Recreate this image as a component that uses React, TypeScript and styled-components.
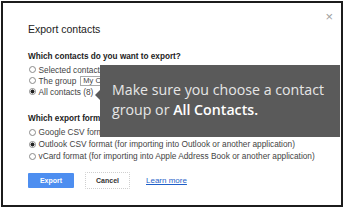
import styled, { createGlobalStyle } from "styled-components";

const GlobalStyle = createGlobalStyle`
  html, body {
    margin: 0;
    padding: 0;
    background: #ffffff;
  }
  body {
    font-family: "Liberation Sans", Arial, sans-serif;
  }
`;

interface Option {
  label: string;
  checked?: boolean;
  withSelect?: boolean;
}

const contactOptions: Option[] = [
  { label: "Selected contacts (0)" },
  { label: "The group", withSelect: true },
  { label: "All contacts (8)", checked: true },
];

const formatOptions: Option[] = [
  { label: "Google CSV format (for importing into a Google account)" },
  {
    label: "Outlook CSV format (for importing into Outlook or another application)",
    checked: true,
  },
  {
    label:
      "vCard format (for importing into Apple Address Book or another application)",
  },
];

function RadioList({ options, pitch }: { options: Option[]; pitch: number }) {
  return (
    <List>
      {options.map((o) => (
        <RadioRow key={o.label} height={pitch}>
          <Radio checked={!!o.checked} />
          <span>{o.label}</span>
          {o.withSelect && <GroupSelect>My Contacts</GroupSelect>}
        </RadioRow>
      ))}
    </List>
  );
}

export default function App() {
  return (
    <>
      <GlobalStyle />
      <Frame>
        <Dialog>
          <Close>×</Close>
          <Title>Export contacts</Title>
          <Heading top={17}>Which contacts do you want to export?</Heading>
          <RadioList options={contactOptions} pitch={11} />
          <Heading top={17}>Which export format?</Heading>
          <RadioList options={formatOptions} pitch={12} />
          <Actions>
            <Button primary>Export</Button>
            <Button>Cancel</Button>
            <LearnMore href="#">Learn more</LearnMore>
          </Actions>
        </Dialog>
        {/* tooltip sits over the form, as in the screenshot */}
        <Tooltip>
          Make sure you choose a contact
          <br />
          group or <strong>All Contacts.</strong>
        </Tooltip>
      </Frame>
    </>
  );
}

const Frame = styled.div`
  position: relative;
  box-sizing: border-box;
  margin: 1px 0 0 1px;
  width: 342px;
  height: 206px;
  border: 2px solid #1c1c1c;
  overflow: hidden;
`;

const Dialog = styled.div`
  display: flex;
  flex-direction: column;
  align-items: flex-start;
  padding: 20px 0 0 25px;
  color: #333;
`;

const Close = styled.div`
  position: absolute;
  top: 7px;
  right: 8px;
  font-size: 13px;
  line-height: 13px;
  color: #a0a0a0;
`;

const Title = styled.div`
  font-size: 10.5px;
  line-height: 12px;
  color: #222;
`;

const Heading = styled.div<{ top: number }>`
  margin-top: ${(p) => p.top}px;
  font-size: 8.2px;
  line-height: 10px;
  font-weight: bold;
  color: #222;
`;

const List = styled.div`
  display: flex;
  flex-direction: column;
  margin-top: 2px;
`;

const RadioRow = styled.div<{ height: number }>`
  display: flex;
  align-items: center;
  height: ${(p) => p.height}px;
  font-size: 8.3px;
  color: #444;
  white-space: nowrap;
`;

const Radio = styled.span<{ checked: boolean }>`
  box-sizing: border-box;
  width: 7px;
  height: 7px;
  margin: 0 2.5px 0 1px;
  border-radius: 50%;
  border: 1px solid #8a8a8a;
  background: ${(p) =>
    p.checked ? "radial-gradient(circle, #222 0 1.8px, #fff 2.2px)" : "#fff"};
`;

const GroupSelect = styled.span`
  box-sizing: border-box;
  height: 10px;
  margin-left: 4px;
  padding: 0 2px;
  border: 1px solid #aaa;
  font-size: 7.5px;
  line-height: 8px;
  color: #444;
`;

const Actions = styled.div`
  display: flex;
  align-items: center;
  gap: 11px;
  margin-top: 10px;
`;

const Button = styled.div<{ primary?: boolean }>`
  box-sizing: border-box;
  display: flex;
  align-items: center;
  justify-content: center;
  width: ${(p) => (p.primary ? 46 : 45)}px;
  height: ${(p) => (p.primary ? 15 : 17)}px;
  font-size: 7px;
  font-weight: bold;
  color: ${(p) => (p.primary ? "#fff" : "#333")};
  background: ${(p) => (p.primary ? "#4d8ef0" : "#fff")};
  border: ${(p) => (p.primary ? "none" : "1px dotted #cfcfcf")};
  border-radius: 1px;
`;

const LearnMore = styled.a`
  margin-left: 5px;
  font-size: 8px;
  color: #1f5fc8;
  text-decoration: underline;
`;

const Tooltip = styled.div`
  position: absolute;
  left: 97px;
  top: 62px;
  width: 240px;
  height: 72px;
  box-sizing: border-box;
  padding: 15px 0 0 12px;
  background: #5a5a5a;
  color: #e6e6e6;
  font-family: "Open Sans", "Noto Sans", sans-serif;
  font-size: 14.2px;
  line-height: 20px;
  white-space: nowrap;

  strong {
    color: #ffffff;
    font-weight: 600;
  }

  &::before {
    content: "";
    position: absolute;
    left: -5px;
    top: 25px;
    border-style: solid;
    border-width: 5px 5px 5px 0;
    border-color: transparent #5a5a5a transparent transparent;
  }
`;
